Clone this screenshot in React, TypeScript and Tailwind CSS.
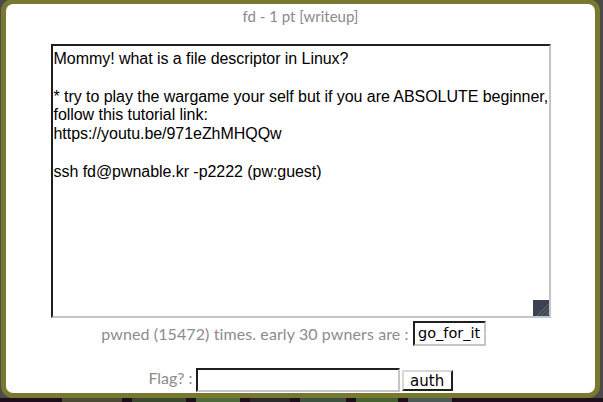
const lato = { fontFamily: "Lato, 'Open Sans', sans-serif" };

const thumbs = [
  { w: 60, c: "#4b4a32" },
  { w: 54, c: "#3a4a2c" },
  { w: 44, c: "#4e6a3a" },
  { w: 40, c: "#2a2a2a" },
  { w: 46, c: "#3c5340" },
  { w: 42, c: "#46622e" },
  { w: 44, c: "#4a5a55" },
];

function Grip() {
  return (
    <svg width="16" height="16" viewBox="0 0 16 16" className="block">
      <rect width="16" height="16" fill="#3c424e" />
      <path d="M4 16 L16 4 M8 16 L16 8 M12 16 L16 12" stroke="#5a6170" strokeWidth="1.2" />
    </svg>
  );
}

export default function App() {
  return (
    <div className="flex h-[402px] w-[603px] flex-col overflow-hidden bg-[#1e0e1c]">
      <div className="flex h-[398px] bg-[#4b4b4b]">
        <div className="-mt-px ml-px flex h-[399px] w-[599px] flex-col items-center rounded-[12px] border-[5px] border-[#787831] bg-white">
          <div className="mt-[2px] h-[20px] text-[15px] leading-[20px] text-[#8a8a8a]" style={lato}>
            fd - 1 pt [writeup]
          </div>

          <div
            className="relative mt-[18px] h-[274px] w-[500px] whitespace-nowrap border-2 border-t-[#1f1f1f] border-l-[#1f1f1f] border-b-[#c4c4cb] border-r-[#c4c4cb] pl-px pt-[4px] text-[16px] leading-[18.8px] tracking-[-0.05px] text-black"
            style={{ fontFamily: "'Liberation Sans', Arial, sans-serif" }}
          >
            <div>Mommy! what is a file descriptor in Linux?</div>
            <div className="h-[18.8px]" />
            <div>* try to play the wargame your self but if you are ABSOLUTE beginner,</div>
            <div>follow this tutorial link:</div>
            <div>https://youtu.be/971eZhMHQQw</div>
            <div className="h-[18.8px]" />
            <div>ssh fd@pwnable.kr -p2222 (pw:guest)</div>
            <div className="absolute bottom-0 right-0">
              <Grip />
            </div>
          </div>

          <div className="mt-[3px] flex items-center gap-[4px] pr-[14px]">
            <span className="text-[16px] tracking-[0.1px] text-[#8c8c8c]" style={lato}>
              pwned (15472) times. early 30 pwners are :
            </span>
            <span
              className="flex h-[25px] w-[73px] items-center justify-center border-2 border-t-[#1f1f1f] border-l-[#1f1f1f] border-b-[#c4c4cb] border-r-[#c4c4cb] text-[14.5px] text-black"
              style={{ fontFamily: "'DejaVu Sans', sans-serif" }}
            >
              go_for_it
            </span>
          </div>

          <div className="mt-[20px] flex items-end gap-[2px]">
            <span className="mb-[2px] mr-[1px] text-[16px] text-[#8c8c8c]" style={lato}>
              Flag? :
            </span>
            <input
              className="h-[24px] w-[204px] border-2 border-t-[#1f1f1f] border-l-[#1f1f1f] border-b-[#c4c4cb] border-r-[#c4c4cb] bg-white outline-none"
              type="text"
            />
            <button
              className="mb-px h-[21px] w-[51px] border-2 border-t-[#d8d8d8] border-l-[#d8d8d8] border-b-[#1f1f1f] border-r-[#1f1f1f] bg-white text-[15px] leading-[16px] text-black"
              style={{ fontFamily: "'DejaVu Sans', sans-serif" }}
            >
              auth
            </button>
          </div>
        </div>
      </div>
      <div className="flex h-[4px] gap-[10px] pl-[62px]">
        {thumbs.map((t, i) => (
          <div key={i} className="h-full" style={{ width: t.w, background: t.c }} />
        ))}
      </div>
    </div>
  );
}
